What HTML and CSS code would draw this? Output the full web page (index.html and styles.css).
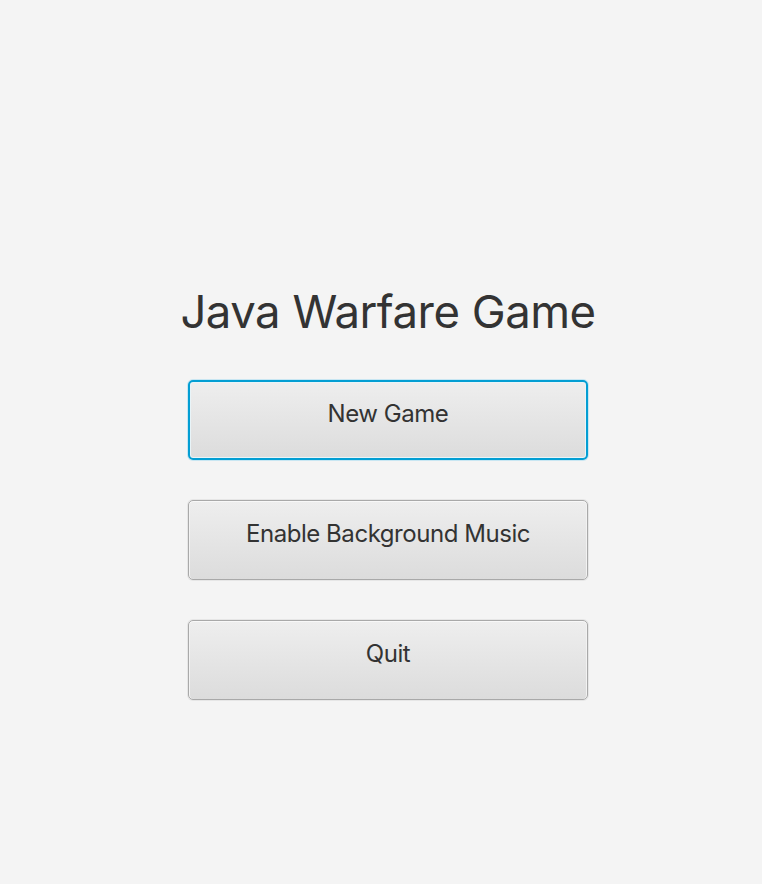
FILE: index.html
```html
<!DOCTYPE html>
<html>
<head>
<meta charset="utf-8">
<link rel="stylesheet" href="styles.css">
</head>
<body>
<div class="menu">
  <h1 class="title">Java Warfare Game</h1>
  <div class="buttons">
    <button class="btn focused">New Game</button>
    <button class="btn">Enable Background Music</button>
    <button class="btn">Quit</button>
  </div>
</div>
</body>
</html>
```
FILE: styles.css
```css
html, body {
  margin: 0;
  padding: 0;
  background: #f4f4f4;
  height: 100%;
}
.menu {
  display: flex;
  flex-direction: column;
  align-items: center;
  padding-top: 278px;
  padding-left: 14px;
  font-family: Inter, "Noto Sans", sans-serif;
  color: #333333;
}
.title {
  margin: 0;
  font-size: 45.5px;
  font-weight: 400;
  line-height: 68px;
  letter-spacing: -0.5px;
}
.buttons {
  display: flex;
  flex-direction: column;
  gap: 40px;
  margin-top: 34px;
}
.btn {
  width: 400px;
  height: 80px;
  box-sizing: border-box;
  border: 1px solid #a9a9a9;
  border-radius: 5px;
  background: linear-gradient(#eeeeee, #dcdcdc);
  box-shadow: 0 0 0 1px #e6e6e6, inset 0 1px 0 #f8f8f8, inset 1px 0 0 #f2f2f2, inset -1px 0 0 #f2f2f2;
  font-family: Inter, "Noto Sans", sans-serif;
  font-size: 24px;
  color: #333333;
  padding: 0 0 14px 0;
  letter-spacing: -0.45px;
}
.btn.focused {
  border: 2px solid #039ed3;
  box-shadow: 0 0 0 1px #c8e6f2, inset 0 0 0 1px #e8f4f8;
}
```
